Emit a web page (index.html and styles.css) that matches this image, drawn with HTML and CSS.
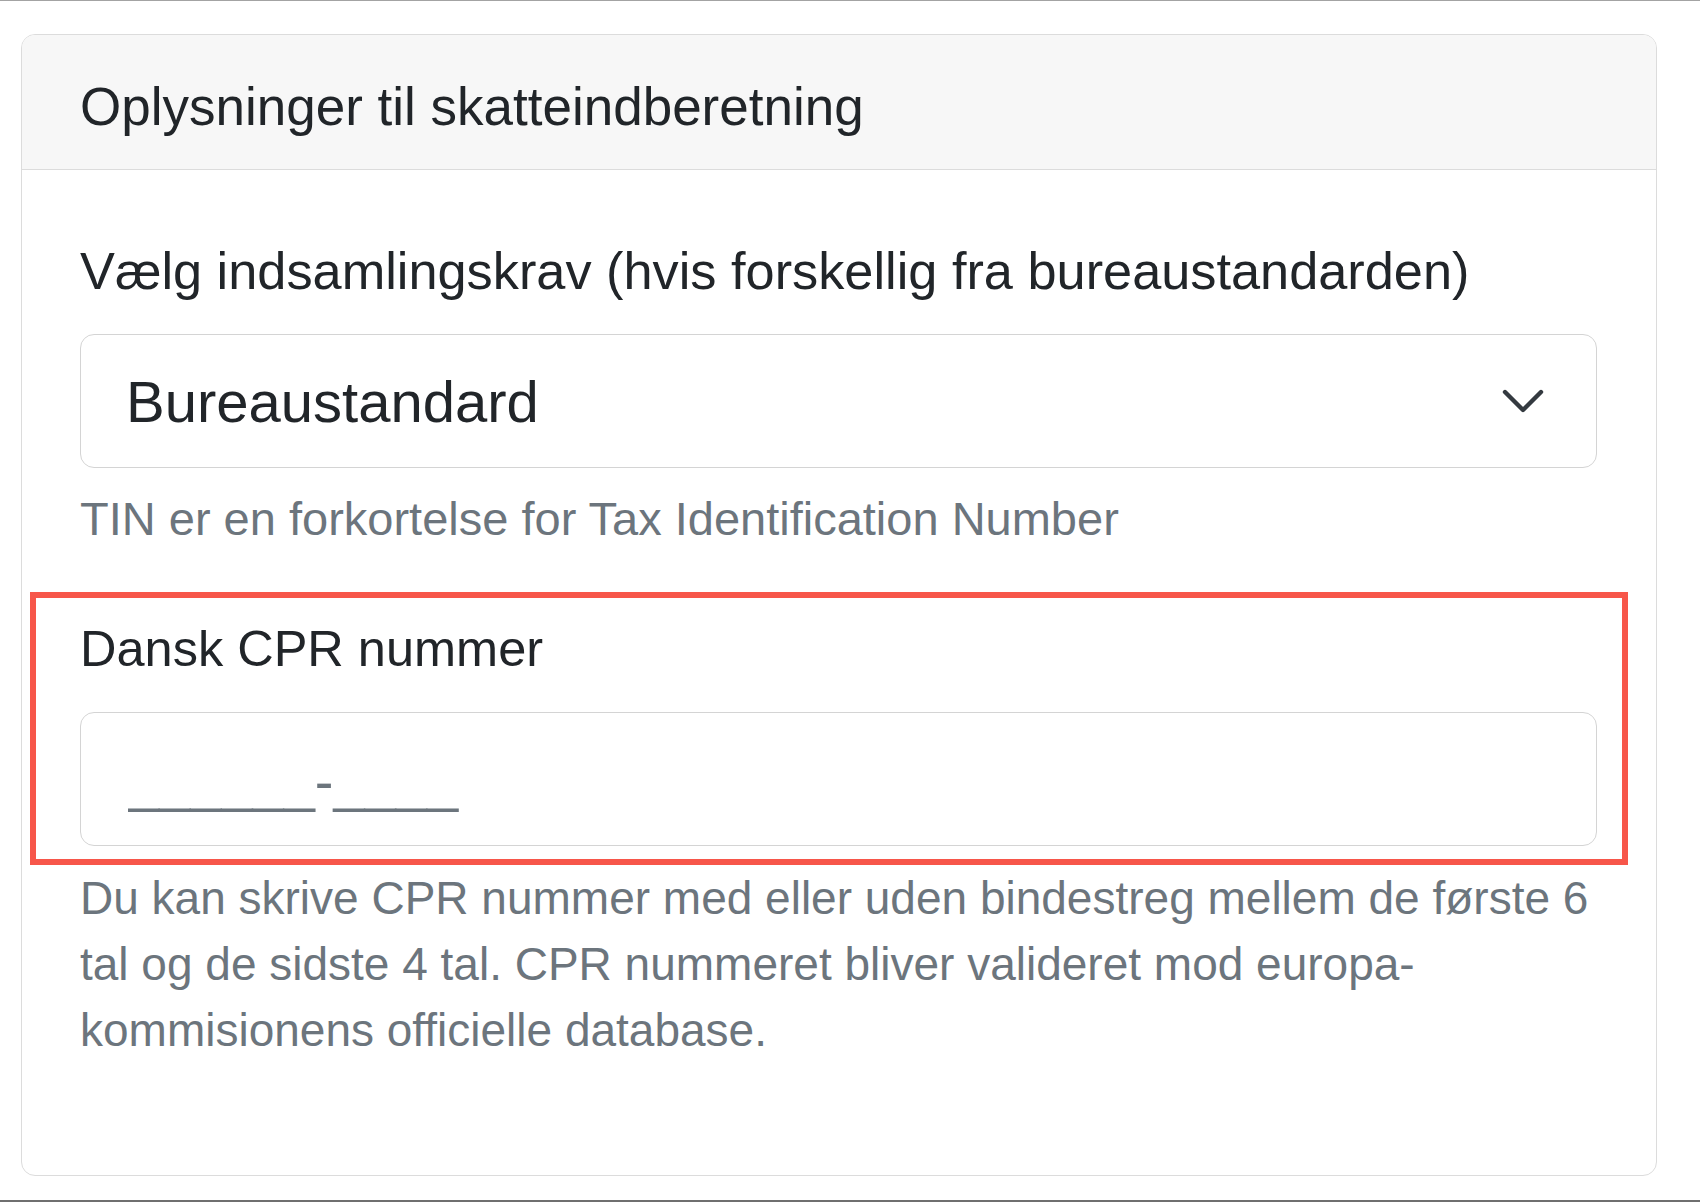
FILE: index.html
```html
<!DOCTYPE html>
<html lang="da">
<head>
    <meta charset="UTF-8">
    <meta name="viewport" content="width=device-width, initial-scale=1.0">
    <title>Skatteindberetning</title>
    <link rel="stylesheet" href="styles.css">
</head>
<body>
    <div class="frame">
      <section class="card">
        <header class="card-header">Oplysninger til skatteindberetning</header>
        <div class="card-body">
          <label class="field-label" for="krav">Vælg indsamlingskrav (hvis forskellig fra bureaustandarden)</label>
          <div class="select-box" id="krav">
            <span>Bureaustandard</span>
            <svg class="chevron" width="42" height="26" viewBox="0 0 42 26" aria-hidden="true">
              <path d="M3 4 L21 22 L39 4" fill="none" stroke="#343a40" stroke-width="4.4" stroke-linecap="round" stroke-linejoin="round"/>
            </svg>
          </div>
          <p class="help">TIN er en forkortelse for Tax Identification Number</p>

          <div class="highlight">
            <label class="field-label cpr-label" for="cpr">Dansk CPR nummer</label>
            <input class="text-input" type="text" id="cpr" name="cpr" placeholder="______-____">
          </div>
          <p class="help help-long">Du kan skrive CPR nummer med eller uden bindestreg mellem de første 6 tal og de sidste 4 tal. CPR nummeret bliver valideret mod europa-kommisionens officielle database.</p>
        </div>
      </section>
    </div>
</body>
</html>
```

FILE: styles.css
```css
* {
    margin: 0;
    padding: 0;
    box-sizing: border-box;
    font-family: "Liberation Sans", Arial, Helvetica, sans-serif;
}

body {
    background-color: #fff;
    color: #212529;
}

.frame {
    height: 1202px;
    border-top: 1px solid #a3a3a3;
    border-bottom: 2px solid #6f6f6f;
    overflow: hidden;
}

.card {
    margin: 33px 43px 0 21px;
    border: 1px solid #dcdcdc;
    border-radius: 14px;
    overflow: hidden;
}

.card-header {
    display: block;
    background-color: #f7f7f7;
    border-bottom: 1px solid #dcdcdc;
    padding: 36px 58px 26px;
    font-size: 53px;
    line-height: 72px;
}

.card-body {
    padding: 65px 59px 112px 58px;
}

.field-label {
    display: block;
    font-size: 52.3px;
    line-height: 72px;
    margin-bottom: 27px;
}

.cpr-label {
    font-size: 50.5px;
}

.select-box {
    display: flex;
    align-items: center;
    justify-content: space-between;
    height: 134px;
    padding: 0 52px 0 45px;
    border: 1px solid #d4d4d4;
    border-radius: 14px;
    font-size: 58px;
}

.chevron {
    flex-shrink: 0;
}

.help {
    color: #6c757d;
    font-size: 47px;
    line-height: 65px;
    margin-top: 18px;
}

.help-long {
    margin-top: 0;
    font-size: 46px;
    line-height: 66px;
}

.highlight {
    margin: 41px -31px 0 -50px;
    padding: 15px 25px 13px 44px;
    border: 6px solid #f7564a;
}

.text-input {
    display: block;
    width: 100%;
    height: 134px;
    padding: 4px 47px 0;
    border: 1px solid #d4d4d4;
    border-radius: 14px;
    font-size: 56px;
    color: #212529;
    background-color: #fff;
    outline: none;

    &::placeholder {
        color: #6c757d;
    }
}
```
